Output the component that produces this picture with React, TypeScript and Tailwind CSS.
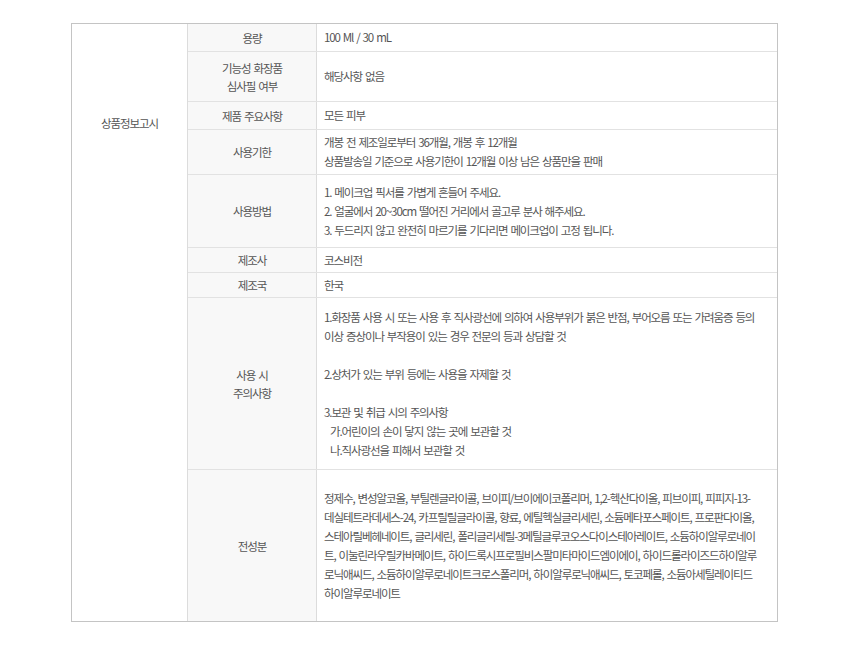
const font = { fontFamily: '"Noto Sans CJK KR", "Noto Sans", sans-serif' };

interface Row {
  label: string[];
  h: string;
  lines: string[];
}

const rows: Row[] = [
  { label: ["용량"], h: "h-[28px]", lines: ["100 Ml / 30 mL"] },
  { label: ["기능성 화장품", "심사필 여부"], h: "h-[50px]", lines: ["해당사항 없음"] },
  { label: ["제품 주요사항"], h: "h-[28px]", lines: ["모든 피부"] },
  {
    label: ["사용기한"],
    h: "h-[45px]",
    lines: ["개봉 전 제조일로부터 36개월, 개봉 후 12개월", "상품발송일 기준으로 사용기한이 12개월 이상 남은 상품만을 판매"],
  },
  {
    label: ["사용방법"],
    h: "h-[73px]",
    lines: [
      "1. 메이크업 픽서를 가볍게 흔들어 주세요.",
      "2. 얼굴에서 20~30cm 떨어진 거리에서 골고루 분사 해주세요.",
      "3. 두드리지 않고 완전히 마르기를 기다리면 메이크업이 고정 됩니다.",
    ],
  },
  { label: ["제조사"], h: "h-[25px]", lines: ["코스비전"] },
  { label: ["제조국"], h: "h-[25px]", lines: ["한국"] },
  {
    label: ["사용 시", "주의사항"],
    h: "h-[172px]",
    lines: [
      "1.화장품 사용 시 또는 사용 후 직사광선에 의하여 사용부위가 붉은 반점, 부어오름 또는 가려움증 등의",
      "이상 증상이나 부작용이 있는 경우 전문의 등과 상담할 것",
      "",
      "2.상처가 있는 부위 등에는 사용을 자제할 것",
      "",
      "3.보관 및 취급 시의 주의사항",
      "\u00a0\u00a0가.어린이의 손이 닿지 않는 곳에 보관할 것",
      "\u00a0\u00a0나.직사광선을 피해서 보관할 것",
    ],
  },
  {
    label: ["전성분"],
    h: "h-[151px]",
    lines: [
      "정제수, 변성알코올, 부틸렌글라이콜, 브이피/브이에이코폴리머, 1,2-헥산다이올, 피브이피, 피피지-13-",
      "데실테트라데세스-24, 카프릴릴글라이콜, 향료, 에틸헥실글리세린, 소듐메타포스페이트, 프로판다이올,",
      "스테아릴베헤네이트, 글리세린, 폴리글리세릴-3메틸글루코오스다이스테아레이트, 소듐하이알루로네이",
      "트, 이눌린라우릴카바메이트, 하이드록시프로필비스팔미타마이드엠이에이, 하이드롤라이즈드하이알루",
      "로닉애씨드, 소듐하이알루로네이트크로스폴리머, 하이알루로닉애씨드, 토코페롤, 소듐아세틸레이티드",
      "하이알루로네이트",
    ],
  },
];

export default function App() {
  return (
    <div className="min-h-[666px] w-[848px] bg-white pt-[23px] pl-[71px]" style={font}>
      <div className="flex w-[707px] border border-[#c4c4c4] text-[11.5px] leading-[19px] tracking-[-1.1px] [word-spacing:1.5px] text-[#555]">
        <div className="w-[116px] shrink-0 border-r border-[#dcdcdc] pt-[90px] text-center">상품정보고시</div>
        <div className="w-[589px] shrink-0">
          {rows.map((r, i) => (
            <div
              key={i}
              className={`flex ${r.h} ${i < rows.length - 1 ? "border-b border-[#e2e2e2]" : ""}`}
            >
              <div className="flex w-[129px] shrink-0 flex-col items-center justify-center border-r border-[#dcdcdc] bg-[#f8f8f8] leading-[18px]">
                {r.label.map((l) => (
                  <span key={l}>{l}</span>
                ))}
              </div>
              <div className="flex w-[460px] min-w-0 shrink-0 flex-col justify-center pl-[7px]">
                {r.lines.map((l, j) => (
                  <span key={j} className="h-[19px] whitespace-pre">
                    {l}
                  </span>
                ))}
              </div>
            </div>
          ))}
        </div>
      </div>
    </div>
  );
}
